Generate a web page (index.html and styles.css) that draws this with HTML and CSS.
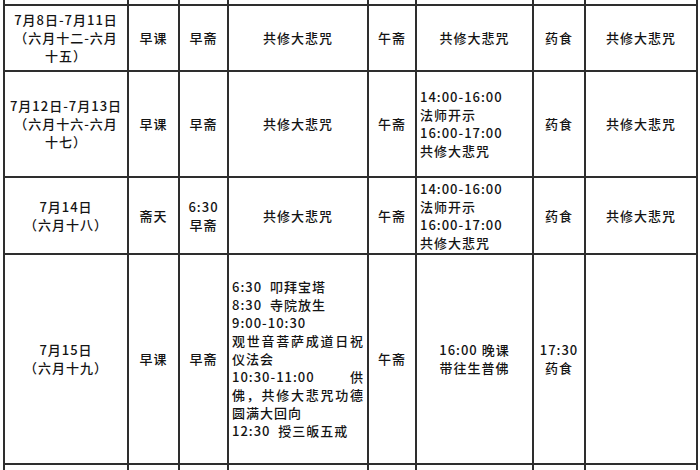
FILE: index.html
```html
<!DOCTYPE html>
<html lang="zh">
<head>
<meta charset="utf-8">
<link rel="stylesheet" href="styles.css">
</head>
<body>
<table class="sched">
  <colgroup>
    <col class="c1"><col class="c2"><col class="c3"><col class="c4"><col class="c5"><col class="c6"><col class="c7"><col class="c8">
  </colgroup>
  <tr class="r0">
    <td></td><td></td><td></td><td></td><td></td><td></td><td></td><td></td>
  </tr>
  <tr class="r1">
    <td>7月8日-7月11日<br>（六月十二-六月<br>十五）</td>
    <td>早课</td>
    <td>早斋</td>
    <td>共修大悲咒</td>
    <td>午斋</td>
    <td>共修大悲咒</td>
    <td>药食</td>
    <td>共修大悲咒</td>
  </tr>
  <tr class="r2">
    <td>7月12日-7月13日<br>（六月十六-六月<br>十七）</td>
    <td>早课</td>
    <td>早斋</td>
    <td>共修大悲咒</td>
    <td>午斋</td>
    <td class="left">14:00-16:00<br>法师开示<br>16:00-17:00<br>共修大悲咒</td>
    <td>药食</td>
    <td>共修大悲咒</td>
  </tr>
  <tr class="r3">
    <td>7月14日<br>（六月十八）</td>
    <td>斋天</td>
    <td>6:30<br>早斋</td>
    <td>共修大悲咒</td>
    <td>午斋</td>
    <td class="left">14:00-16:00<br>法师开示<br>16:00-17:00<br>共修大悲咒</td>
    <td>药食</td>
    <td>共修大悲咒</td>
  </tr>
  <tr class="r4">
    <td>7月15日<br>（六月十九）</td>
    <td>早课</td>
    <td>早斋</td>
    <td class="left">
      <div>6:30&nbsp; 叩拜宝塔</div>
      <div>8:30&nbsp; 寺院放生</div>
      <div>9:00-10:30</div>
      <div class="full">观世音菩萨成道日祝</div>
      <div>仪法会</div>
      <div class="full">10:30-11:00 供</div>
      <div class="full">佛，共修大悲咒功德</div>
      <div>圆满大回向</div>
      <div>12:30&nbsp; 授三皈五戒</div>
    </td>
    <td>午斋</td>
    <td>16:00 晚课<br>带往生普佛</td>
    <td>17:30<br>药食</td>
    <td></td>
  </tr>
  <tr class="r5">
    <td></td><td></td><td></td><td></td><td></td><td></td><td></td><td></td>
  </tr>
</table>
</body>
</html>
```
FILE: styles.css
```css
html, body {
  margin: 0;
  padding: 0;
  background: #ffffff;
  overflow: hidden;
}

body {
  width: 700px;
  height: 470px;
}

.sched {
  border-collapse: collapse;
  table-layout: fixed;
  width: 693px;
  margin: -34px 0 0 3px;
  font-family: "Noto Sans CJK SC", "Noto Sans CJK TC", sans-serif;
  font-size: 13px;
  font-weight: 500;
  letter-spacing: 1px;
  line-height: 18px;
  color: #141414;
}

.c1 { width: 124px; }
.c2 { width: 51px; }
.c3 { width: 49px; }
.c4 { width: 140px; }
.c5 { width: 48px; }
.c6 { width: 117px; }
.c7 { width: 52px; }
.c8 { width: 112px; }

.sched td {
  border: 2px solid #2e2e2e;
  padding: 0 3px;
  text-align: center;
  vertical-align: middle;
  overflow: hidden;
}

.sched td.left {
  text-align: left;
}

.sched .full {
  text-align: justify;
  text-align-last: justify;
}

.r0 td { height: 36px; }
.r1 td { height: 64px; }
.r2 td { height: 104px; }
.r3 td { height: 75px; }
.r4 td { height: 208px; }
.r5 td { height: 30px; }
```
